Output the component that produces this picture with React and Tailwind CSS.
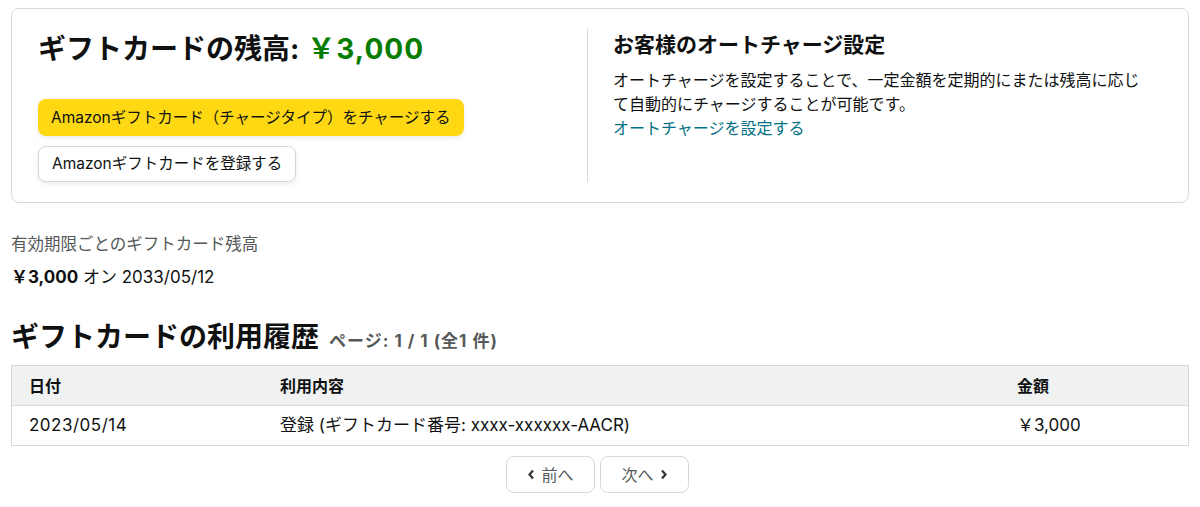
import React from "react";

const font = { fontFamily: 'Inter, "Noto Sans CJK JP", sans-serif' };

function Chevron({ dir }) {
  return (
    <svg width="8" height="11" viewBox="0 0 8 11">
      <path
        d={dir === "left" ? "M6 1.5 L2.5 5.5 L6 9.5" : "M2 1.5 L5.5 5.5 L2 9.5"}
        fill="none"
        stroke="#333"
        strokeWidth="2.2"
      />
    </svg>
  );
}

export default function App() {
  return (
    <div className="w-[1200px] bg-white text-[#0f1111] px-[11px] pt-[8px]" style={font}>
      <div className="border border-[#d5d9d9] rounded-[8px] flex px-[26px] pt-[20px] pb-[20px]">
        <div className="w-[550px] border-r border-[#d5d9d9]">
          <div className="flex items-baseline gap-[8px] h-[40px]">
            <span className="text-[28px] font-bold leading-[40px]">ギフトカードの残高:</span>
            <span className="text-[28px] font-bold text-[#067d00] leading-[40px] tracking-[1px]">￥3,000</span>
          </div>
          <div className="mt-[30px] flex flex-col items-start gap-[10px]">
            <button className="h-[37px] px-[13px] rounded-[8px] bg-[#ffd814] text-[15.5px] shadow-[0_2px_5px_0_rgba(213,217,217,0.5)]">
              Amazonギフトカード（チャージタイプ）をチャージする
            </button>
            <button className="h-[36px] px-[13px] rounded-[8px] bg-white border border-[#d5d9d9] text-[15.5px] shadow-[0_2px_5px_0_rgba(213,217,217,0.5)]">
              Amazonギフトカードを登録する
            </button>
          </div>
        </div>
        <div className="pl-[25px] flex-1">
          <div className="text-[21px] font-bold leading-[30px] mt-[1px]">お客様のオートチャージ設定</div>
          <p className="text-[16px] leading-[24px] mt-[8px] w-[530px]">
            オートチャージを設定することで、一定金額を定期的にまたは残高に応じて自動的にチャージすることが可能です。
          </p>
          <a className="text-[16px] leading-[24px] text-[#007185] block">オートチャージを設定する</a>
        </div>
      </div>

      <div className="mt-[30px] text-[16.5px] text-[#565959] leading-[22px]">有効期限ごとのギフトカード残高</div>
      <div className="mt-[11px] text-[17px] leading-[22px]">
        <span className="font-bold">￥3,000</span> オン 2033/05/12
      </div>

      <div className="mt-[31px] flex items-baseline gap-[10px]">
        <span className="text-[28px] font-bold leading-[36px]">ギフトカードの利用履歴</span>
        <span className="text-[17px] font-bold text-[#565959] tracking-[1px]">ページ: 1 / 1 (全1 件)</span>
      </div>

      <div className="mt-[10px] border border-[#d5d9d9]">
        <div className="flex h-[40px] items-center bg-[#f0f2f2] border-b border-[#d5d9d9] text-[16px] font-bold">
          <div className="w-[268px] pl-[17px]">日付</div>
          <div className="w-[737px]">利用内容</div>
          <div className="flex-1">金額</div>
        </div>
        <div className="flex h-[39px] items-center text-[17px]">
          <div className="w-[268px] pl-[17px] tracking-[0.5px]">2023/05/14</div>
          <div className="w-[737px]">登録 (ギフトカード番号: xxxx-xxxxxx-AACR)</div>
          <div className="flex-1">￥3,000</div>
        </div>
      </div>

      <div className="mt-[10px] flex justify-center gap-[5px] pr-[5px]">
        <button className="w-[89px] h-[37px] border border-[#d5d9d9] rounded-[8px] text-[16px] text-[#565959] flex items-center justify-center gap-[6px]">
          <Chevron dir="left" />
          前へ
        </button>
        <button className="w-[89px] h-[37px] border border-[#d5d9d9] rounded-[8px] text-[16px] text-[#565959] flex items-center justify-center gap-[6px]">
          次へ
          <Chevron dir="right" />
        </button>
      </div>
    </div>
  );
}
